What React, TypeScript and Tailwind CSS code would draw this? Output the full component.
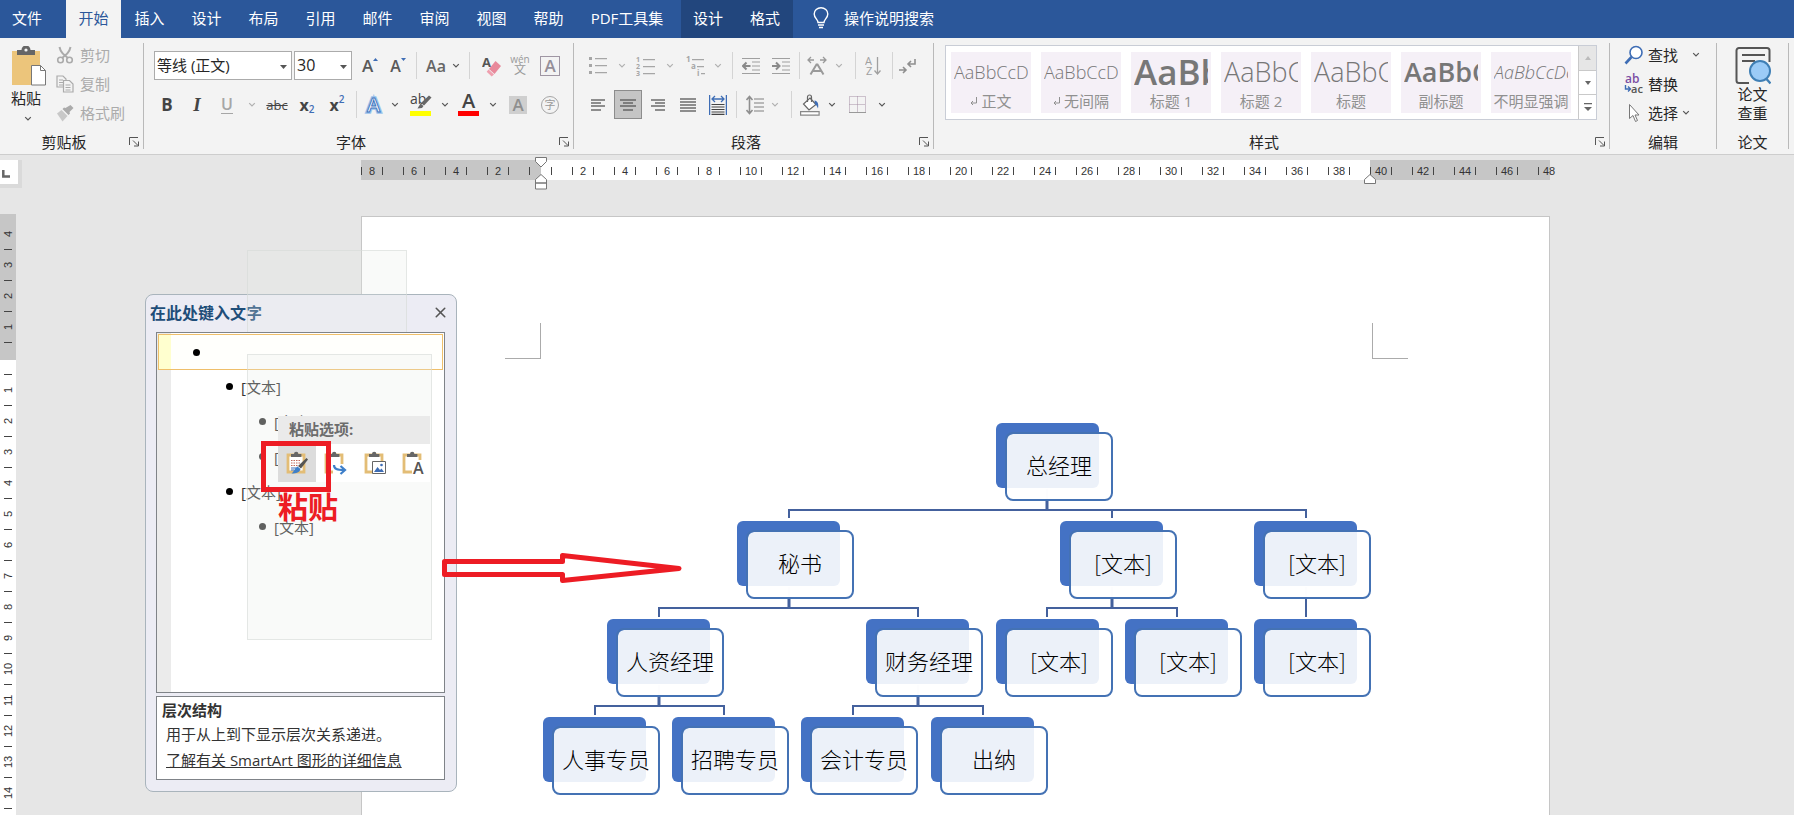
import React from 'react';
import { X } from 'lucide-react';

const uiFont = "font-['Open_Sans','Noto_Sans_CJK_SC',sans-serif]";

const tabs = ['插入', '设计', '布局', '引用', '邮件', '审阅', '视图', '帮助'];

const styleTiles = [
  { sample: 'AaBbCcDc', name: '正文', mark: true, look: 'text-[18px] font-light' },
  { sample: 'AaBbCcDc', name: '无间隔', mark: true, look: 'text-[18px] font-light' },
  { sample: 'AaBb', name: '标题 1', mark: false, look: 'text-[35px] font-semibold' },
  { sample: 'AaBbC', name: '标题 2', mark: false, look: 'text-[27px] font-light' },
  { sample: 'AaBbC', name: '标题', mark: false, look: 'text-[27px] font-light' },
  { sample: 'AaBbC', name: '副标题', mark: false, look: 'text-[27px] font-semibold' },
  { sample: 'AaBbCcDc', name: '不明显强调', mark: false, look: 'text-[18px] font-light italic' },
];

// Positions are relative to the drawing canvas, top-left of the back plate
const nodes = [
  { label: '总经理', x: 635, y: 207 },
  { label: '秘书', x: 376, y: 305 },
  { label: '[文本]', x: 699, y: 305 },
  { label: '[文本]', x: 893, y: 305 },
  { label: '人资经理', x: 246, y: 403 },
  { label: '财务经理', x: 505, y: 403 },
  { label: '[文本]', x: 635, y: 403 },
  { label: '[文本]', x: 764, y: 403 },
  { label: '[文本]', x: 893, y: 403 },
  { label: '人事专员', x: 182, y: 501 },
  { label: '招聘专员', x: 311, y: 501 },
  { label: '会计专员', x: 440, y: 501 },
  { label: '出纳', x: 570, y: 501 },
];

const outline = [
  { text: '[文本]', indent: 'pl-[68px]', dot: 'bg-black' },
  { text: '[文本]', indent: 'pl-[101px]', dot: 'bg-[#333]' },
  { text: '[文本]', indent: 'pl-[101px]', dot: 'bg-[#333]' },
  { text: '[文本]', indent: 'pl-[68px]', dot: 'bg-black' },
  { text: '[文本]', indent: 'pl-[101px]', dot: 'bg-[#333]' },
];

const Chevron = ({ color = '#555' }: { color?: string }) => (
  <svg width="8" height="6" viewBox="0 0 8 6" fill="none" stroke={color} strokeWidth="1.2">
    <path d="M1.2 1.2 4 4l2.800-2.800" />
  </svg>
);

const Tool = ({ w = 'w-7', label, children, className = '' }: { w?: string; label: string; children: React.ReactNode; className?: string }) => (
  <button aria-label={label} className={`flex h-[29px] shrink-0 items-center justify-center ${w} ${className}`}>
    {children}
  </button>
);

const Sep = ({ className = 'mx-1' }: { className?: string }) => <span className={`h-[27px] w-px shrink-0 bg-[#d4d4d4] ${className}`} />;

const Launcher = ({ label }: { label: string }) => (
  <button aria-label={label} className="flex h-3 w-3 items-center justify-center">
    <svg width="11" height="10" viewBox="0 0 11 10" fill="none" stroke="#555" strokeWidth="1">
      <path d="M.5 8V.5H9M4 3.500l5 5M9.500 4.500v4.500H5" />
    </svg>
  </button>
);

const Group = ({ w, title, launcher, children }: { w: string; title: string; launcher?: boolean; children: React.ReactNode }) => (
  <section aria-label={title} className={`flex h-[116px] shrink-0 flex-col ${w}`}>
    {children}
    <div className="mt-auto flex h-6 items-center">
      <span className="flex-1 text-center">{title}</span>
      {launcher && <span className="mr-[3px]"><Launcher label={`${title}设置`} /></span>}
    </div>
  </section>
);

const Divider = () => <span className="my-[5px] w-px shrink-0 bg-[#b9b9b9]" />;

const Lines = ({ rows, color = '#555', w = 18 }: { rows: [number, number, number][]; color?: string; w?: number }) => (
  <svg width={w} height="18" viewBox={`0 0 ${w} 18`} stroke={color} strokeWidth="1.3">
    {rows.map(([x1, x2, y]) => (
      <path key={y} d={`M${x1} ${y}H${x2}`} />
    ))}
  </svg>
);

const ClipboardBase = () => (
  <>
    <path d="M2 4h16v17H2z" fill="#fff" stroke="#e3bd76" strokeWidth="2.800" />
    <path d="M5 6V3h3a2.200 2.200 0 0 1 4.400 0h3v3z" fill="#666" />
  </>
);

const TabBar = () => (
  <nav className="flex h-[38px] items-stretch bg-[#2b579a] text-[15px] text-white">
    <button className="w-[66px] pb-0.5 pl-3 text-left">文件</button>
    <button className="w-[55px] bg-[#f3f3f3] pb-0.5 text-[#2b579a]">开始</button>
    {tabs.map((tab) => (
      <button key={tab} className="w-[57px] pb-0.5">{tab}</button>
    ))}
    <button className="w-[104px] pr-1 pb-0.5 whitespace-nowrap">PDF工具集</button>
    <button className="w-14 bg-[#22467d] pr-0.5 pb-0.5">设计</button>
    <button className="w-14 bg-[#22467d] pb-0.5">格式</button>
    <button className="ml-5 flex items-center gap-[15px] pb-0.5">
      <svg width="16" height="22" viewBox="0 0 16 22" fill="none" stroke="#fff" strokeWidth="1.400">
        <path d="M5 15.500c0-3-3.800-4.500-3.800-8.500a6.800 6.300 0 0 1 13.600 0c0 4-3.800 5.500-3.800 8.500zM5 18h6M6 20.500h4" />
      </svg>
      操作说明搜索
    </button>
  </nav>
);

const ClipboardGroup = () => (
  <Group w="w-[143px]" title="剪贴板" launcher>
    <div className="flex gap-1 pt-0.5">
      <button className="flex w-[52px] flex-col items-center pt-1.5">
        <svg width="36" height="40" viewBox="0 0 36 40" className="ml-1.5">
          <path d="M1 5h28v34H1z" fill="#ecc57b" />
          <path d="M6 9V4h4.500a4.500 4.500 0 0 1 9 0H24v5z" fill="#666" />
          <circle cx="15" cy="4" r="1.600" fill="#f3f3f3" />
          <path d="M20.500 19.500h9l5 5V39h-14z" fill="#fff" stroke="#777" />
          <path d="M29.500 19.500v5h5" fill="none" stroke="#777" />
        </svg>
        <span className="h-6 leading-6">粘贴</span>
        <span className="mt-1.5 ml-1"><Chevron /></span>
      </button>
      <div className="flex flex-col text-[#ababab]">
        <button className="flex h-[29px] items-center gap-1.5">
          <svg width="18" height="18" viewBox="0 0 18 18" fill="none" stroke="#ababab" strokeWidth="1.600">
            <circle cx="4.500" cy="14" r="2.800" />
            <circle cx="13.500" cy="14" r="2.800" />
            <path d="M3.500 1c1 5 3.500 7 8.500 11M14.500 1c-1 5-3.500 7-8.500 11" strokeWidth="2" />
          </svg>
          剪切
        </button>
        <button className="flex h-[29px] items-center gap-1.5">
          <svg width="18" height="18" viewBox="0 0 18 18" fill="#f3f3f3" stroke="#ababab" strokeWidth="1.200">
            <path d="M1 1h6l3 3v8H1zM3 5h4M3 7.500h4M3 10h4" />
            <path d="M7.500 5.500h6l3.500 3.500v8H7.500zM9.500 10h5M9.500 12.500h5M9.500 15h5" />
          </svg>
          复制
        </button>
        <button className="flex h-[29px] items-center gap-1.5">
          <svg width="18" height="18" viewBox="0 0 18 18" fill="#ababab">
            <path d="m14.500 1 3 3-4 4 .5 1.500-1.500 1.500-6-6L8 3.500 9.500 4z" />
            <path d="m5.500 6 6 6-5 5.500L1 9.500z" opacity=".6" />
          </svg>
          格式刷
        </button>
      </div>
    </div>
  </Group>
);

const FontGroup = () => (
  <Group w="w-[429px]" title="字体" launcher>
    <div className="flex items-center pt-[13px] pl-[10px]">
      <div className="relative w-[138px]">
        <select aria-label="字体" className="h-[29px] w-full appearance-none border border-[#ababab] bg-white pb-px pl-0.5 text-[15px]">
          <option>等线 (正文)</option>
        </select>
        <svg width="8" height="4" viewBox="0 0 8 4" className="pointer-events-none absolute top-3.5 right-1"><path d="M0 0h7L3.500 4z" fill="#555" /></svg>
      </div>
      <div className="relative ml-0.5 w-[58px]">
        <select aria-label="字号" className="h-[29px] w-full appearance-none border border-[#ababab] bg-white pb-px pl-0.5 text-[16px]">
          <option>30</option>
        </select>
        <svg width="8" height="4" viewBox="0 0 8 4" className="pointer-events-none absolute top-3.5 right-1"><path d="M0 0h7L3.500 4z" fill="#555" /></svg>
      </div>
      <Tool label="增大字号" className="ml-1">
        <span className="text-[17px] font-semibold text-[#595959]">A</span>
        <svg width="5" height="18" viewBox="0 0 5 18"><path d="M0 4h5L2.500 1z" fill="#3e6db5" /></svg>
      </Tool>
      <Tool label="减小字号">
        <span className="text-[16px] font-semibold text-[#595959]">A</span>
        <svg width="5" height="18" viewBox="0 0 5 18"><path d="M0 1h5L2.500 4z" fill="#3e6db5" /></svg>
      </Tool>
      <Sep />
      <Tool w="w-[30px]" label="更改大小写"><span className="text-[16px] font-semibold text-[#666]">Aa</span></Tool>
      <Tool w="w-2.5" label="更多大小写"><Chevron /></Tool>
      <Sep className="mx-2" />
      <Tool label="清除格式">
        <svg width="20" height="22" viewBox="0 0 20 22">
          <text x="0" y="12" fontSize="13" fontWeight="700" fill="#555">A</text>
          <path d="m13.500 6 5.500 5-6.500 8L7 14z" fill="#e8899b" />
          <path d="m6.500 14.600 5.500 5-2.300 1.800-5-4.600z" fill="#ef9fae" />
        </svg>
      </Tool>
      <Tool label="拼音指南">
        <span className="flex flex-col items-center text-[#9a9a9a]">
          <span className="text-[10px] leading-[9px]">wén</span>
          <span className="text-[12px] leading-3">文</span>
        </span>
      </Tool>
      <Tool w="w-8" label="字符边框">
        <span className="flex h-5 w-5 items-center justify-center border border-[#9f96a3] text-[17px] font-semibold text-[#958f99]">A</span>
      </Tool>
    </div>
    <div className="flex items-center pt-2.5 pl-2 text-[17px] text-[#444]">
      <Tool w="w-[30px]" label="加粗"><b>B</b></Tool>
      <Tool w="w-[30px]" label="倾斜"><b className="font-['Liberation_Serif',serif] text-[19px] italic">I</b></Tool>
      <Tool w="w-[30px]" label="下划线"><span className="border-b border-[#a6a6a6] text-[16px] leading-[17px] font-semibold text-[#a6a6a6]">U</span></Tool>
      <Tool w="w-5" label="下划线样式"><Chevron color="#b0b0b0" /></Tool>
      <Tool w="w-[30px]" label="删除线"><span className="text-[13px] line-through">abc</span></Tool>
      <Tool w="w-[30px]" label="下标"><b className="text-[16px]">x</b><span className="pt-2 text-[10px] font-semibold text-[#3e6db5]">2</span></Tool>
      <Tool w="w-[30px]" label="上标"><b className="text-[16px]">x</b><span className="pb-3 text-[10px] font-semibold text-[#3e6db5]">2</span></Tool>
      <Sep />
      <Tool w="w-[26px]" label="文本效果">
        <svg width="20" height="22" viewBox="0 0 20 22">
          <text x="3" y="18" fontSize="20" fontWeight="600" fill="#fff" stroke="#9cc3ec" strokeWidth="3.500" paintOrder="stroke">A</text>
          <text x="3" y="18" fontSize="20" fontWeight="600" fill="#fff" stroke="#3f74bd" strokeWidth="1">A</text>
        </svg>
      </Tool>
      <Tool w="w-4" label="更多文本效果"><Chevron /></Tool>
      <Tool w="w-9" label="突出显示">
        <svg width="22" height="24" viewBox="0 0 22 24">
          <text x="0" y="11" fontSize="14" fill="#444">ab</text>
          <path d="m19 2.500 2.500 2-7.500 8-3-2.500z" fill="#666" />
          <path d="m10.500 10.500 3 2.500-1.500 2-4.500.5z" fill="#666" />
          <path d="M0 18h21v5H0z" fill="#ff0" />
        </svg>
      </Tool>
      <Tool w="w-3" label="突出显示颜色"><Chevron /></Tool>
      <Tool w="w-9" label="字体颜色">
        <svg width="22" height="24" viewBox="0 0 22 24">
          <text x="4" y="15" fontSize="20" fontWeight="600" fill="#444">A</text>
          <path d="M0 18h21v5H0z" fill="#f00" />
        </svg>
      </Tool>
      <Tool w="w-3" label="更多颜色"><Chevron /></Tool>
      <Tool w="w-[38px]" label="字符底纹">
        <span className="flex h-[18px] w-[18px] items-center justify-center bg-[#cfcfcf] font-semibold text-[#8f8f8f]">A</span>
      </Tool>
      <Tool label="带圈字符" w="w-[26px]">
        <span className="flex h-[18px] w-[18px] items-center justify-center rounded-full border border-[#a6a6a6] text-[11px] leading-3 text-[#999]">字</span>
      </Tool>
    </div>
  </Group>
);

const ParagraphGroup = () => (
  <Group w="w-[359px]" title="段落" launcher>
    <div className="flex items-center pt-[13px] pl-[10px]">
      <Tool label="项目符号">
        <svg width="18" height="18" viewBox="0 0 18 18" fill="#a6a6a6">
          <path d="M0 0h3v3H0zM0 7h3v3H0zM0 14h3v3H0zM6 1h12v1.200H6zM6 8h12v1.200H6zM6 15h12v1.200H6z" />
        </svg>
      </Tool>
      <Tool w="w-5" label="项目符号库"><Chevron color="#b0b0b0" /></Tool>
      <Tool label="编号">
        <svg width="20" height="20" viewBox="0 0 20 20" fill="#a6a6a6" fontSize="7" fontWeight="700">
          <text x="0" y="6">1</text><text x="0" y="13">2</text><text x="0" y="20">3</text>
          <path d="M7 3h12v1.200H7zM7 10h12v1.200H7zM7 17h12v1.200H7z" />
        </svg>
      </Tool>
      <Tool w="w-5" label="编号库"><Chevron color="#b0b0b0" /></Tool>
      <Tool w="w-8" label="多级列表">
        <svg width="20" height="20" viewBox="0 0 20 20" fill="#a6a6a6" fontSize="8" fontWeight="700">
          <text x="0" y="6">1</text><text x="5" y="13">a</text><text x="11" y="20">i</text>
          <path d="M6 3h12v1.200H6zM11 10h7v1.200h-7zM15 17h4v1.200h-4z" />
        </svg>
      </Tool>
      <Tool w="w-3" label="多级列表库"><Chevron color="#b0b0b0" /></Tool>
      <Sep className="mr-1 ml-2" />
      <Tool label="减少缩进量">
        <svg width="18" height="18" viewBox="0 0 18 18" fill="none" stroke="#9f9f9f" strokeWidth="1.200">
          <path d="M0 1.500h18M10 5h8M10 9h8M10 13h8M0 16.500h18" />
          <path d="M8.500 9H1.500M4.500 5.500 1 9l3.500 3.500" stroke="#8a8a8a" strokeWidth="2" />
        </svg>
      </Tool>
      <Tool w="w-8" label="增加缩进量">
        <svg width="18" height="18" viewBox="0 0 18 18" fill="none" stroke="#9f9f9f" strokeWidth="1.200">
          <path d="M0 1.500h18M10 5h8M10 9h8M10 13h8M0 16.500h18" />
          <path d="M0 9h7M4 5.500 7.500 9 4 12.500" stroke="#8a8a8a" strokeWidth="2" />
        </svg>
      </Tool>
      <Sep className="mr-px ml-0.5" />
      <Tool w="w-8" label="中文版式">
        <svg width="20" height="20" viewBox="0 0 20 20" fill="none" stroke="#9a9a9a" strokeWidth="1.300">
          <path d="M1 4h6M4 1 1 4l3 3M19 4h-6M16 1l3 3-3 3" />
          <path d="m3.500 18.500 6-10h1l6 10M6 15h8" strokeWidth="2" />
        </svg>
      </Tool>
      <Tool w="w-3" label="更多中文版式"><Chevron color="#b0b0b0" /></Tool>
      <Sep className="mr-1 ml-2.5" />
      <Tool label="排序">
        <svg width="18" height="20" viewBox="0 0 18 20" fill="#a0a0a0" fontSize="11">
          <text x="0" y="9">A</text><text x="1" y="19">Z</text>
          <path d="M12.500 1v17M9.500 14.500l3 3.500 3-3.500" fill="none" stroke="#a0a0a0" strokeWidth="1.300" />
        </svg>
      </Tool>
      <Sep className="mr-px ml-1" />
      <Tool label="显示编辑标记">
        <svg width="18" height="18" viewBox="0 0 18 18" fill="none" stroke="#8f8f8f" strokeWidth="1.600">
          <path d="M16 2v5H9M12 4 9 7l3 3M0 13h7M4 10l3 3-3 3" />
        </svg>
      </Tool>
    </div>
    <div className="flex items-center pt-2.5 pl-[10px]">
      <Tool label="左对齐"><Lines w={16} rows={[[1, 15, 4], [1, 11, 7], [1, 15, 10], [1, 11, 14]]} /></Tool>
      <Tool label="居中" className="ml-0.5 border border-[#8c8c8c] bg-[#c5c5c5]"><Lines w={16} rows={[[0, 16, 4], [3, 13, 7], [0, 16, 10], [3, 13, 14]]} /></Tool>
      <Tool w="w-8" label="右对齐"><Lines w={16} rows={[[1, 15, 4], [5, 15, 7], [1, 15, 10], [5, 15, 14]]} /></Tool>
      <Tool label="两端对齐"><Lines w={16} rows={[[0, 16, 3], [0, 16, 6], [0, 16, 9], [0, 16, 12], [0, 16, 15]]} /></Tool>
      <Tool w="w-8" label="分散对齐">
        <svg width="18" height="20" viewBox="0 0 18 20" fill="none" stroke="#444" strokeWidth="1.200">
          <path d="M.600 0v20M17.400 0v20M3 4h12M6 1 3 4l3 3M12 1l3 3-3 3" stroke="#3e6db5" strokeWidth="1.300" />
          <path d="M2.500 9.500h13M2.500 12h13M2.500 14.500h13M2.500 17h13M2.500 19.400h13" />
        </svg>
      </Tool>
      <Sep className="mr-1 ml-0.5" />
      <Tool label="行距">
        <svg width="18" height="20" viewBox="0 0 18 20" fill="none" stroke="#a6a6a6" strokeWidth="1.300">
          <path d="M8 4h10M8 8h10M8 12h10M8 16h10" />
          <path d="M3.500 2v16M.500 5l3-3.500 3 3.500M.500 15l3 3.500 3-3.500" stroke="#8f8f8f" strokeWidth="1.600" />
        </svg>
      </Tool>
      <Tool w="w-3" label="行距选项"><Chevron color="#b0b0b0" /></Tool>
      <Sep className="mr-1 ml-2.5" />
      <Tool label="底纹">
        <svg width="20" height="22" viewBox="0 0 20 22" fill="#fff" stroke="#666" strokeWidth="1.200">
          <path d="m10 4 6 6.500-7 5.500-5.500-6z" />
          <path d="M7.500 8V3a2 2 0 0 1 4 0v5" fill="none" />
          <path d="M14.500 6.500c3 .500 4.500 3 3.500 8-1-2.500-1.500-3.500-3-4z" fill="#3e6db5" stroke="none" />
          <path d="M.600 17.600h18.500v3.500H.600z" stroke="#888" />
        </svg>
      </Tool>
      <Tool w="w-4" label="底纹颜色"><Chevron /></Tool>
      <Tool w="w-9" label="边框">
        <svg width="18" height="18" viewBox="0 0 18 18" fill="none" stroke="#a58fa5" strokeDasharray="1 1">
          <path d="M.500.500h16v16H.500zM8.500.500v16M.500 8.500h16" />
          <path d="M0 16.500h17" stroke="#999" strokeDasharray="none" />
        </svg>
      </Tool>
      <Tool w="w-3" label="边框选项"><Chevron /></Tool>
    </div>
  </Group>
);

const StylesGroup = () => (
  <Group w="w-[675px]" title="样式" launcher>
    <div className="mt-[7px] ml-[11px] flex h-[75px] w-[652px] border border-[#c9cdd6] bg-white">
      <div className="flex flex-1 gap-2.5 py-1.5 pl-[5px]">
        {styleTiles.map((tile) => (
          <button key={tile.name} className="flex h-[61px] w-20 shrink-0 flex-col bg-[#f5f0f7] px-[3px]">
            <span className={`flex h-[38px] w-full items-center overflow-hidden pt-px whitespace-nowrap text-[#777] ${tile.look}`}>{tile.sample}</span>
            <span className="flex h-[22px] w-full items-center justify-center gap-1 whitespace-nowrap text-[#909090]">
              {tile.mark && (
                <svg width="7" height="9" viewBox="0 0 7 9" fill="none" stroke="#909090"><path d="M6.500 0v6H1M3 4 1 6l2 2" /></svg>
              )}
              {tile.name}
            </span>
          </button>
        ))}
      </div>
      <div className="flex w-[18px] flex-col divide-y divide-[#c9c9c9] border-l border-[#c9c9c9]">
        <button aria-label="上一行" className="flex flex-1 items-center justify-center bg-[#e6e6e6]">
          <svg width="6" height="4" viewBox="0 0 6 4"><path d="M0 4h6L3 0z" fill="#bbb" /></svg>
        </button>
        <button aria-label="下一行" className="flex flex-1 items-center justify-center">
          <svg width="6" height="4" viewBox="0 0 6 4"><path d="M0 0h6L3 4z" fill="#666" /></svg>
        </button>
        <button aria-label="其他" className="flex flex-1 items-center justify-center">
          <svg width="8" height="8" viewBox="0 0 8 8"><path d="M0 0h8v1.200H0zM0 4h8L4 8z" fill="#666" /></svg>
        </button>
      </div>
    </div>
  </Group>
);

const EditGroup = () => (
  <Group w="w-[106px]" title="编辑">
    <div className="flex flex-col pt-0.5 pl-3.5">
      <button className="flex h-[29px] items-center gap-1">
        <svg width="20" height="20" viewBox="0 0 20 20" fill="none" stroke="#3e6db5">
          <circle cx="12" cy="7.500" r="6" fill="#fff" strokeWidth="1.600" />
          <path d="m7.500 12-6 6.500" strokeWidth="2.600" />
        </svg>
        查找
        <span className="ml-2.5"><Chevron /></span>
      </button>
      <button className="flex h-[29px] items-center gap-1">
        <svg width="20" height="22" viewBox="0 0 20 22" fontSize="12" fontWeight="600">
          <text x="1" y="10" fill="#7b4ea3">ab</text>
          <text x="7" y="20" fontSize="11" fill="#555">ac</text>
          <path d="M1.500 12v4H6M4 13.500 6.500 16 4 18.500" fill="none" stroke="#3e6db5" strokeWidth="1.400" />
        </svg>
        替换
      </button>
      <button className="flex h-[29px] items-center gap-1">
        <svg width="20" height="20" viewBox="0 0 20 20" fill="#fff" stroke="#777">
          <path d="M5.500 1.500v14l3.500-3 2.500 6 2-1-2.500-5.500H15z" />
        </svg>
        选择
        <Chevron />
      </button>
    </div>
  </Group>
);

const ThesisGroup = () => (
  <Group w="w-[71px]" title="论文">
    <button className="flex flex-col items-center pt-2">
      <svg width="36" height="40" viewBox="0 0 36 40" fill="none" stroke="#555" strokeWidth="2">
        <path d="M34.500 16V4.500a2.500 2.500 0 0 0-2.500-2.500H4A2.500 2.500 0 0 0 1.500 4.500v30A2.500 2.500 0 0 0 4 37h10" />
        <path d="M7 9h23M7 15h13" />
        <circle cx="25" cy="25" r="10" fill="#9bcbf7" stroke="#3f7fb5" />
        <path d="m31.500 33 4 4.500" stroke="#3f7fb5" strokeWidth="2.400" />
      </svg>
      <span className="h-[19px] leading-[17px]">论文</span>
      <span className="h-[19px] leading-[17px]">查重</span>
    </button>
  </Group>
);

const RulerCells = ({ labels }: { labels: string[] }) => (
  <>
    {labels.map((label, i) => (
      <span key={i} className="flex h-full w-[21px] shrink-0 items-center pt-0.5">
        <span className="h-2 w-px bg-[#444]" />
        <span className="flex-1 text-center">{label}</span>
      </span>
    ))}
  </>
);

const evens = (from: number, count: number) =>
  Array.from({ length: count }, (_, i) => ((from + i) % 2 === 0 ? String(from + i) : ''));

const HorizontalRuler = () => (
  <div className="relative mt-[5px] flex h-5 font-['Liberation_Sans',sans-serif] text-[11px] text-[#333]">
    <div className="flex w-[180px] bg-[#c6c6c6]"><RulerCells labels={['8', '', '6', '', '4', '', '2', '', '']} /></div>
    <div className="flex w-[829px] bg-white pl-2.5"><RulerCells labels={evens(1, 39)} /></div>
    <div className="flex w-[180px] bg-[#c6c6c6]"><RulerCells labels={evens(40, 9)} /></div>
    <svg width="12" height="33" viewBox="0 0 12 33" className="absolute -top-[3px] left-[174px]" fill="#fff" stroke="#777">
      <path d="M.500.500h11v4L6 10 .500 4.500zM6 17.500l5.500 5V26H.500v-3.500zM.500 26h11v6H.500z" />
    </svg>
    <svg width="12" height="10" viewBox="0 0 12 10" className="absolute top-3.5 left-[1003px]" fill="#fff" stroke="#777">
      <path d="m6 .500 5.500 5v4H.500v-4z" />
    </svg>
  </div>
);

const VerticalRuler = () => (
  <div className="flex flex-col font-['Liberation_Sans',sans-serif] text-[11px] text-[#333]">
    <div className="h-[146px] bg-[#c6c6c6] pt-[5px]">
      {['4', '3', '2', '1'].map((n) => (
        <div key={n} className="flex h-[31px] flex-col items-center">
          <span className="flex flex-1 rotate-180 items-center justify-center [writing-mode:vertical-rl]">{n}</span>
          <span className="h-px w-2 bg-[#444]" />
        </div>
      ))}
    </div>
    <div className="flex-1 bg-white pt-3.5">
      {Array.from({ length: 14 }, (_, i) => (
        <div key={i} className="flex h-[31px] flex-col items-center">
          <span className="h-px w-2 bg-[#444]" />
          <span className="flex flex-1 rotate-180 items-center justify-center [writing-mode:vertical-rl]">{i + 1}</span>
        </div>
      ))}
      <div className="mx-auto h-px w-2 bg-[#444]" />
    </div>
  </div>
);

const OrgChart = () => (
  <>
    <svg width="1189" height="600" viewBox="0 0 1189 600" className="absolute top-0 left-0" fill="none" stroke="#44619d" strokeWidth="2">
      <path d="M428 302v-8h517v8M751 294v8" />
      <path d="M298 401v-9h259v9M686 401v-9h130v9M945 383v18" />
      <path d="M234 499v-9h129v9M492 499v-9h130v9" />
      <path d="M686 285v9M428 383v9M751 383v9M298 481v9M557 481v9" strokeWidth="3" />
      <path d="M686 273v10M428 371v10M751 371v10M945 371v10M298 469v10M557 469v10" stroke="#e8ebf3" />
    </svg>
    {nodes.map((node, i) => (
      <div key={i} className="absolute h-[78px] w-[118px]" style={{ left: node.x, top: node.y }}>
        <div className="h-[65px] w-[103px] rounded-md bg-[#4472c4]" />
        <div className="absolute top-[9px] left-[9px] flex h-[69px] w-[108px] items-center justify-center rounded-lg border-2 border-[#4472b4] bg-white/90 bg-clip-padding pb-1.5 font-['Noto_Sans_CJK_SC',sans-serif] text-[22px] leading-7 font-light whitespace-nowrap text-black">
          {node.label}
        </div>
      </div>
    ))}
  </>
);

const TextPane = () => (
  <aside className="absolute top-[78px] -left-[216px] w-[312px] rounded-lg border border-[#a9b4bc] bg-[#ececf4] pr-[11px] pb-[11px] pl-2.5 text-[15px] text-[#333]">
    <div className="-mx-1.5 flex h-[37px] items-center justify-between pb-0.5">
      <h2 className="text-[16px] font-bold text-[#1f4e79]">在此处键入文字</h2>
      <button aria-label="关闭" className="mr-0.5"><X size={17} color="#555" strokeWidth={2.2} /></button>
    </div>
    <ul className="h-[361px] border border-[#7f8388] bg-[linear-gradient(to_right,#ebebeb_14px,#fff_14px)] p-px">
      <li className="flex h-9 items-center border border-[#efbf6a] bg-[linear-gradient(to_right,#ffffcf_12px,#fffffc_12px)] pl-[34px]">
        <span className="h-[7px] w-[7px] rounded-full bg-black" />
      </li>
      {outline.map((row, i) => (
        <li key={i} className={`flex h-[35px] items-center gap-2 pb-0.5 ${row.indent}`}>
          <span className={`h-[7px] w-[7px] rounded-full ${row.dot}`} />
          {row.text}
        </li>
      ))}
    </ul>
    <div className="mt-[3px] h-[84px] border border-[#7f8388] bg-white pt-px pl-[5px] leading-6">
      <h3 className="font-bold">层次结构</h3>
      <p className="pl-1 whitespace-nowrap">用于从上到下显示层次关系递进。</p>
      <a href="#smartart" className="mt-0.5 block pl-1 whitespace-nowrap underline">了解有关 SmartArt 图形的详细信息</a>
    </div>
  </aside>
);

const PasteMenu = () => (
  <div className="absolute top-[200px] -left-[83px] w-[152px] bg-white">
    <div className="flex h-7 items-center bg-[#eaeaea] pb-0.5 pl-[11px] text-[15px] font-bold text-[#6c6c6c]">粘贴选项:</div>
    <div className="flex h-[38px] gap-px">
      <button aria-label="使用目标主题" className="flex w-[38px] shrink-0 items-center justify-center bg-[#dcdcdc]">
        <svg width="22" height="24" viewBox="0 0 22 24">
          <ClipboardBase />
          <path d="M5 9.500h10M5 12h10M5 14.500h7" stroke="#c46a5a" strokeDasharray="1.500 1" />
          <path d="M5 17h5M5 19h3" stroke="#3e6db5" />
          <path d="m20.500 7 1.500 1.500-7 9-3-2.500z" fill="#555" />
          <path d="m11.500 15.500 3 2.500c-1 3.500-4 4.500-9 4.500 2.500-1.500 3-5.500 6-7z" fill="#3e7fc9" />
        </svg>
      </button>
      <button aria-label="保留源格式" className="flex w-[38px] shrink-0 items-center justify-center">
        <svg width="24" height="24" viewBox="0 0 24 24">
          <ClipboardBase />
          <path d="M9 13h13v11H9z" fill="#fff" />
          <path d="M10 14c0 4 3 5 10 5M16.500 15l4.500 4-4.500 4" fill="none" stroke="#3e7fc9" strokeWidth="2.200" />
        </svg>
      </button>
      <button aria-label="图片" className="flex w-[38px] shrink-0 items-center justify-center">
        <svg width="22" height="24" viewBox="0 0 22 24">
          <ClipboardBase />
          <path d="M8.500 10.500h13v12h-13z" fill="#fff" stroke="#666" />
          <path d="m10 21 3.500-5 2.500 3 1.500-1.500L20 21z" fill="#3e6db5" />
          <circle cx="17.500" cy="14" r="1.300" fill="#3e6db5" />
        </svg>
      </button>
      <button aria-label="只保留文本" className="flex w-[38px] shrink-0 items-center justify-center">
        <svg width="24" height="24" viewBox="0 0 24 24">
          <ClipboardBase />
          <path d="M10 9h13v15H10z" fill="#fff" />
          <text x="11" y="23" fontSize="16" fontWeight="600" fill="#555">A</text>
        </svg>
      </button>
    </div>
  </div>
);

const Annotations = () => (
  <>
    <div className="absolute top-[225px] -left-[100px] h-[51px] w-[70px] border-[5px] border-[#ed1c24]" />
    <div className="absolute top-[273px] -left-[83px] text-[30px] leading-9 font-bold text-[#ed1c24]">粘贴</div>
    <svg width="246" height="34" viewBox="0 0 246 34" className="absolute top-[335px] left-[79px]" fill="none" stroke="#ed1c24" strokeWidth="5" strokeLinejoin="round">
      <path d="M4.500 10.500h118v-6L239 17.500 122.500 29.500v-6H4.500z" />
    </svg>
  </>
);

export default function App() {
  return (
    <div lang="zh-CN" className={`flex min-h-screen flex-col overflow-hidden bg-[#e6e6e6] text-[15px] leading-5 text-[#262626] ${uiFont}`}>
      <TabBar />
      <header className="flex border-b border-[#cdcdcd] bg-[#f3f3f3]">
        <ClipboardGroup />
        <Divider />
        <FontGroup />
        <Divider />
        <ParagraphGroup />
        <Divider />
        <StylesGroup />
        <Divider />
        <EditGroup />
        <Divider />
        <ThesisGroup />
        <Divider />
      </header>
      <main className="grid flex-1 grid-cols-[16px_345fr_1189px_244fr] grid-rows-[59px_1fr]">
        <div className="pt-[5px]">
          <button aria-label="左对齐制表符" className="flex h-7 w-[22px] items-center border-r-4 border-b-4 border-[#dadada] bg-white pt-1 pl-0.5">
            <svg width="8" height="8" viewBox="0 0 8 8" fill="none" stroke="#666" strokeWidth="2.500"><path d="M1.300 0v6.500H8" /></svg>
          </button>
        </div>
        <div />
        <HorizontalRuler />
        <div />
        <VerticalRuler />
        <div />
        <div className="relative mt-0.5 flex min-h-[580px]">
          <div className="flex flex-1 items-start justify-between border border-b-0 border-[#c6c6c6] bg-white pt-[106px] pr-[141px] pl-[143px]">
            <div className="h-9 w-9 border-r border-b border-[#ababab]" />
            <div className="h-9 w-9 border-b border-l border-[#ababab]" />
          </div>
          <OrgChart />
          <TextPane />
          {/* fading context menu */}
          <div className="absolute top-[34px] -left-[114px] h-[82px] w-40 border border-b-0 border-[#d5dad7]/60 bg-[#e7ede9]/25" />
          <div className="absolute top-[138px] -left-[114px] h-[286px] w-[185px] border border-[#d5dad7]/60 bg-[#e7ede9]/25" />
          <PasteMenu />
          <Annotations />
        </div>
        <div />
      </main>
    </div>
  );
}
